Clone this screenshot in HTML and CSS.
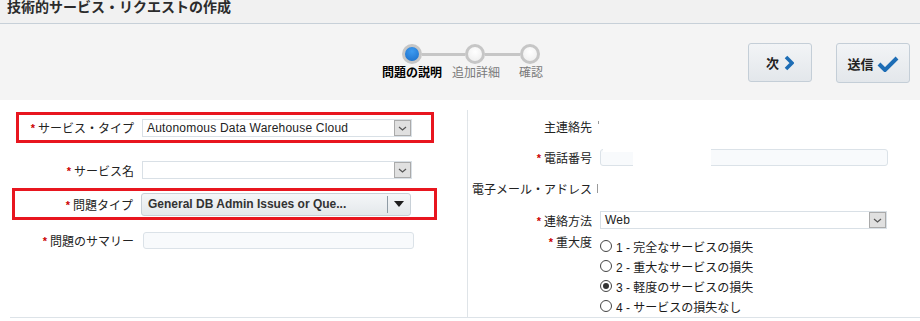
FILE: index.html
```html
<!DOCTYPE html>
<html lang="ja">
<head>
    <meta charset="UTF-8">
    <title>技術的サービス・リクエストの作成</title>
    <link rel="stylesheet" href="styles.css">
</head>
<body>
    <div class="titlebar">技術的サービス・リクエストの作成</div>

    <!-- Train + actions -->
    <div class="toolbar">
        <div class="train">
            <div class="track">
                <span class="stop current"></span>
                <span class="link link-a"></span>
                <span class="stop"></span>
                <span class="link link-b"></span>
                <span class="stop"></span>
            </div>
            <div class="stop-labels">
                <span class="sl sl-1 current">問題の説明</span>
                <span class="sl sl-2">追加詳細</span>
                <span class="sl sl-3">確認</span>
            </div>
        </div>
        <div class="actions">
            <button class="btn btn-next">次
                <svg width="10" height="16" viewBox="0 0 10 16"><path d="M2 2 L8 8 L2 14" fill="none" stroke="#1d6db5" stroke-width="3.6" stroke-linejoin="miter"/></svg>
            </button>
            <button class="btn btn-submit">送信
                <svg width="22" height="17" viewBox="0 0 22 17"><path d="M2 9 L8 15 L20 3" fill="none" stroke="#1d6db5" stroke-width="4" stroke-linejoin="miter"/></svg>
            </button>
        </div>
    </div>

    <div class="form">
        <!-- Left column -->
        <div class="col-left">
            <div class="hl hl-a">
                <label class="lbl"><span class="req">*</span>サービス・タイプ</label>
                <div class="select">
                    <span class="val">Autonomous Data Warehouse Cloud</span>
                    <span class="dd"><svg width="15" height="14" viewBox="0 0 15 14"><path d="M4 6 L7.5 9 L11 6" fill="none" stroke="#555" stroke-width="1.2"/></svg></span>
                </div>
            </div>

            <div class="row row-name">
                <label class="lbl"><span class="req">*</span>サービス名</label>
                <div class="select">
                    <span class="val"></span>
                    <span class="dd"><svg width="15" height="14" viewBox="0 0 15 14"><path d="M4 6 L7.5 9 L11 6" fill="none" stroke="#555" stroke-width="1.2"/></svg></span>
                </div>
            </div>

            <div class="hl hl-b">
                <label class="lbl"><span class="req">*</span>問題タイプ</label>
                <div class="select-btn">
                    <span class="val">General DB Admin Issues or Que...</span>
                    <span class="caret"><span class="tri"></span></span>
                </div>
            </div>

            <div class="row row-summary">
                <label class="lbl"><span class="req">*</span>問題のサマリー</label>
                <div class="input"></div>
            </div>
        </div>

        <!-- Right column -->
        <div class="col-right">
            <div class="frow">
                <label class="flbl">主連絡先</label>
                <span class="cut cut-short"></span>
            </div>
            <div class="frow frow-phone">
                <label class="flbl"><span class="req">*</span>電話番号</label>
                <div class="input input-phone">
                    <span class="mask mask-a"></span>
                    <span class="mask mask-b"></span>
                </div>
            </div>
            <div class="frow frow-mail">
                <label class="flbl">電子メール・アドレス</label>
                <span class="cut"></span>
            </div>
            <div class="frow frow-method">
                <label class="flbl"><span class="req">*</span>連絡方法</label>
                <div class="select select-wide">
                    <span class="val">Web</span>
                    <span class="dd"><svg width="15" height="14" viewBox="0 0 15 14"><path d="M4 6 L7.5 9 L11 6" fill="none" stroke="#555" stroke-width="1.2"/></svg></span>
                </div>
            </div>
            <div class="frow frow-sev">
                <label class="flbl"><span class="req">*</span>重大度</label>
                <div class="radios">
                    <div class="opt"><span class="radio"></span>1 - 完全なサービスの損失</div>
                    <div class="opt"><span class="radio"></span>2 - 重大なサービスの損失</div>
                    <div class="opt"><span class="radio on"></span>3 - 軽度のサービスの損失</div>
                    <div class="opt"><span class="radio"></span>4 - サービスの損失なし</div>
                </div>
            </div>
        </div>
    </div>
    <div class="rule"></div>
</body>
</html>
```

FILE: styles.css
```css
* {
    margin: 0;
    padding: 0;
    box-sizing: border-box;
}

body {
    font-family: "Liberation Sans", "Noto Sans CJK JP", sans-serif;
    font-size: 12px;
    color: #222;
    background: #fff;
    width: 920px;
    overflow: hidden;
}

/* Title bar */
.titlebar {
    height: 24px;
    padding-left: 7px;
    font-size: 14px;
    line-height: 14px;
    font-weight: bold;
    color: #2b2b2b;
    background: #f1f1f1;
    border-bottom: 1px solid #c7d0d8;
}

/* Toolbar */
.toolbar {
    height: 76px;
    background: #f4f4f4;
    display: flex;
}

.train {
    margin-left: 382px;
    padding-top: 20px;
}

.track {
    display: flex;
    align-items: center;
    margin-left: 20px;
}

.stop {
    width: 20px;
    height: 20px;
    border-radius: 50%;
    border: 3px solid #c6c6c6;
    background: radial-gradient(circle at 50% 35%, #ffffff 0%, #ececec 100%);
}

.stop.current {
    background: radial-gradient(circle at 50% 30%, #3d9bf0 0%, #1a6dc8 100%);
}

.link {
    height: 3px;
    background: #c6c6c6;
}

.link-a { width: 43px; }
.link-b { width: 35px; }

.stop-labels {
    display: flex;
    margin-top: 2px;
}

.sl {
    text-align: center;
    line-height: 14px;
    color: #7a7a7a;
}

.sl.current {
    color: #000;
    font-weight: bold;
}

.sl-1 { width: 60px; }
.sl-2 { width: 68px; }
.sl-3 { width: 42px; }

.actions {
    margin-left: auto;
    padding: 19px 10px 0 0;
    display: flex;
    align-items: flex-start;
    gap: 24px;
}

.btn {
    display: flex;
    align-items: center;
    justify-content: center;
    gap: 5px;
    height: 39px;
    border: 1px solid #c4ced7;
    border-radius: 3px;
    background: linear-gradient(#f2f4f6, #e3e7eb);
    font-family: "Liberation Sans", "Noto Sans CJK JP", sans-serif;
    font-size: 13px;
    font-weight: bold;
    color: #222;
}

.btn-next { width: 64px; }
.btn-submit { width: 74px; height: 40px; gap: 3px; }

/* Form */
.form {
    display: flex;
    height: 217px;
}

.col-left {
    width: 467px;
    padding-top: 12px;
}

.hl {
    display: flex;
    align-items: center;
    border: 3px solid #e8161f;
}

.hl-a {
    margin-left: 16px;
    width: 418px;
    height: 31px;
}

.hl-a .lbl { width: 117px; }

.hl-b {
    margin: 9px 0 0 12px;
    width: 425px;
    height: 32px;
}

.hl-b .lbl { width: 120px; }

.row {
    display: flex;
    align-items: center;
}

.row-name {
    margin-top: 18px;
    height: 18px;
}

.row-summary {
    margin-top: 12px;
    height: 17px;
}

.lbl {
    width: 136px;
    padding-right: 2px;
    text-align: right;
    white-space: nowrap;
    color: #222;
}

.req {
    color: #cc0000;
    font-size: 11px;
    font-weight: bold;
    margin-right: 3px;
    position: relative;
    top: -1px;
}

.select {
    margin-left: 6px;
    width: 270px;
    height: 18px;
    display: flex;
    align-items: center;
    border: 1px solid #d9e0e6;
    background: #fff;
}

.select .val {
    padding-left: 4px;
    letter-spacing: 0.2px;
    white-space: nowrap;
}

.dd {
    margin-left: auto;
    width: 17px;
    height: 16px;
    display: flex;
    align-items: center;
    justify-content: center;
    background: #e0e0e0;
    border: 1px solid #aaaaaa;
}

.select-btn {
    margin-left: 6px;
    width: 270px;
    height: 23px;
    display: flex;
    align-items: center;
    border: 1px solid #c8d0d7;
    border-radius: 3px;
    background: linear-gradient(#f4f6f8, #e4e8eb);
}

.select-btn .val {
    padding-left: 6px;
    font-weight: bold;
    color: #333;
    white-space: nowrap;
}

.caret {
    margin-left: auto;
    width: 23px;
    height: 17px;
    border-left: 1px solid #8f9ba5;
    display: flex;
    align-items: center;
    justify-content: center;
}

.tri {
    width: 0;
    height: 0;
    border-left: 5px solid transparent;
    border-right: 5px solid transparent;
    border-top: 6px solid #1e1e1e;
}

.input {
    margin-left: 7px;
    width: 271px;
    height: 17px;
    border: 1px solid #dbe2e8;
    border-radius: 3px;
    background: #f8fafc;
}

/* Right column */
.col-right {
    flex: 1;
    margin-top: 10px;
    padding-top: 6px;
    border-left: 1px solid #dfe4e8;
}

.frow {
    display: flex;
    align-items: center;
    height: 20px;
}

.flbl {
    width: 124px;
    text-align: right;
    white-space: nowrap;
    color: #222;
}

.frow-phone { margin-top: 11px; }
.frow-mail { margin-top: 11px; }
.frow-method { margin-top: 12px; }

.frow-sev {
    margin-top: 6px;
    align-items: flex-start;
    height: auto;
}

.frow-sev .flbl {
    line-height: 14px;
}

.cut {
    margin-left: 5px;
    width: 1px;
    height: 9px;
    background: #9a9a9a;
}

.cut-short {
    height: 3px;
    margin-top: -8px;
    margin-left: 6px;
}

.input-phone {
    position: relative;
    margin-left: 8px;
    width: 288px;
}

.mask {
    position: absolute;
    background: #fff;
}

.mask-a {
    left: 32px;
    top: -3px;
    width: 78px;
    height: 23px;
}

.mask-b {
    left: 2px;
    top: -3px;
    width: 96px;
    height: 5px;
}

.select-wide {
    margin-left: 8px;
    width: 287px;
}

.radios {
    margin-left: 8px;
}

.opt {
    height: 20px;
    display: flex;
    align-items: center;
    white-space: nowrap;
    color: #1a1a1a;
}

.radio {
    width: 12px;
    height: 12px;
    margin-right: 4px;
    border-radius: 50%;
    border: 1px solid #444;
    background: #fff;
    display: flex;
    align-items: center;
    justify-content: center;
}

.radio.on::after {
    content: "";
    width: 6px;
    height: 6px;
    border-radius: 50%;
    background: #333;
}

.rule {
    margin-left: 10px;
    height: 1px;
    background: #dde3e8;
}
```
